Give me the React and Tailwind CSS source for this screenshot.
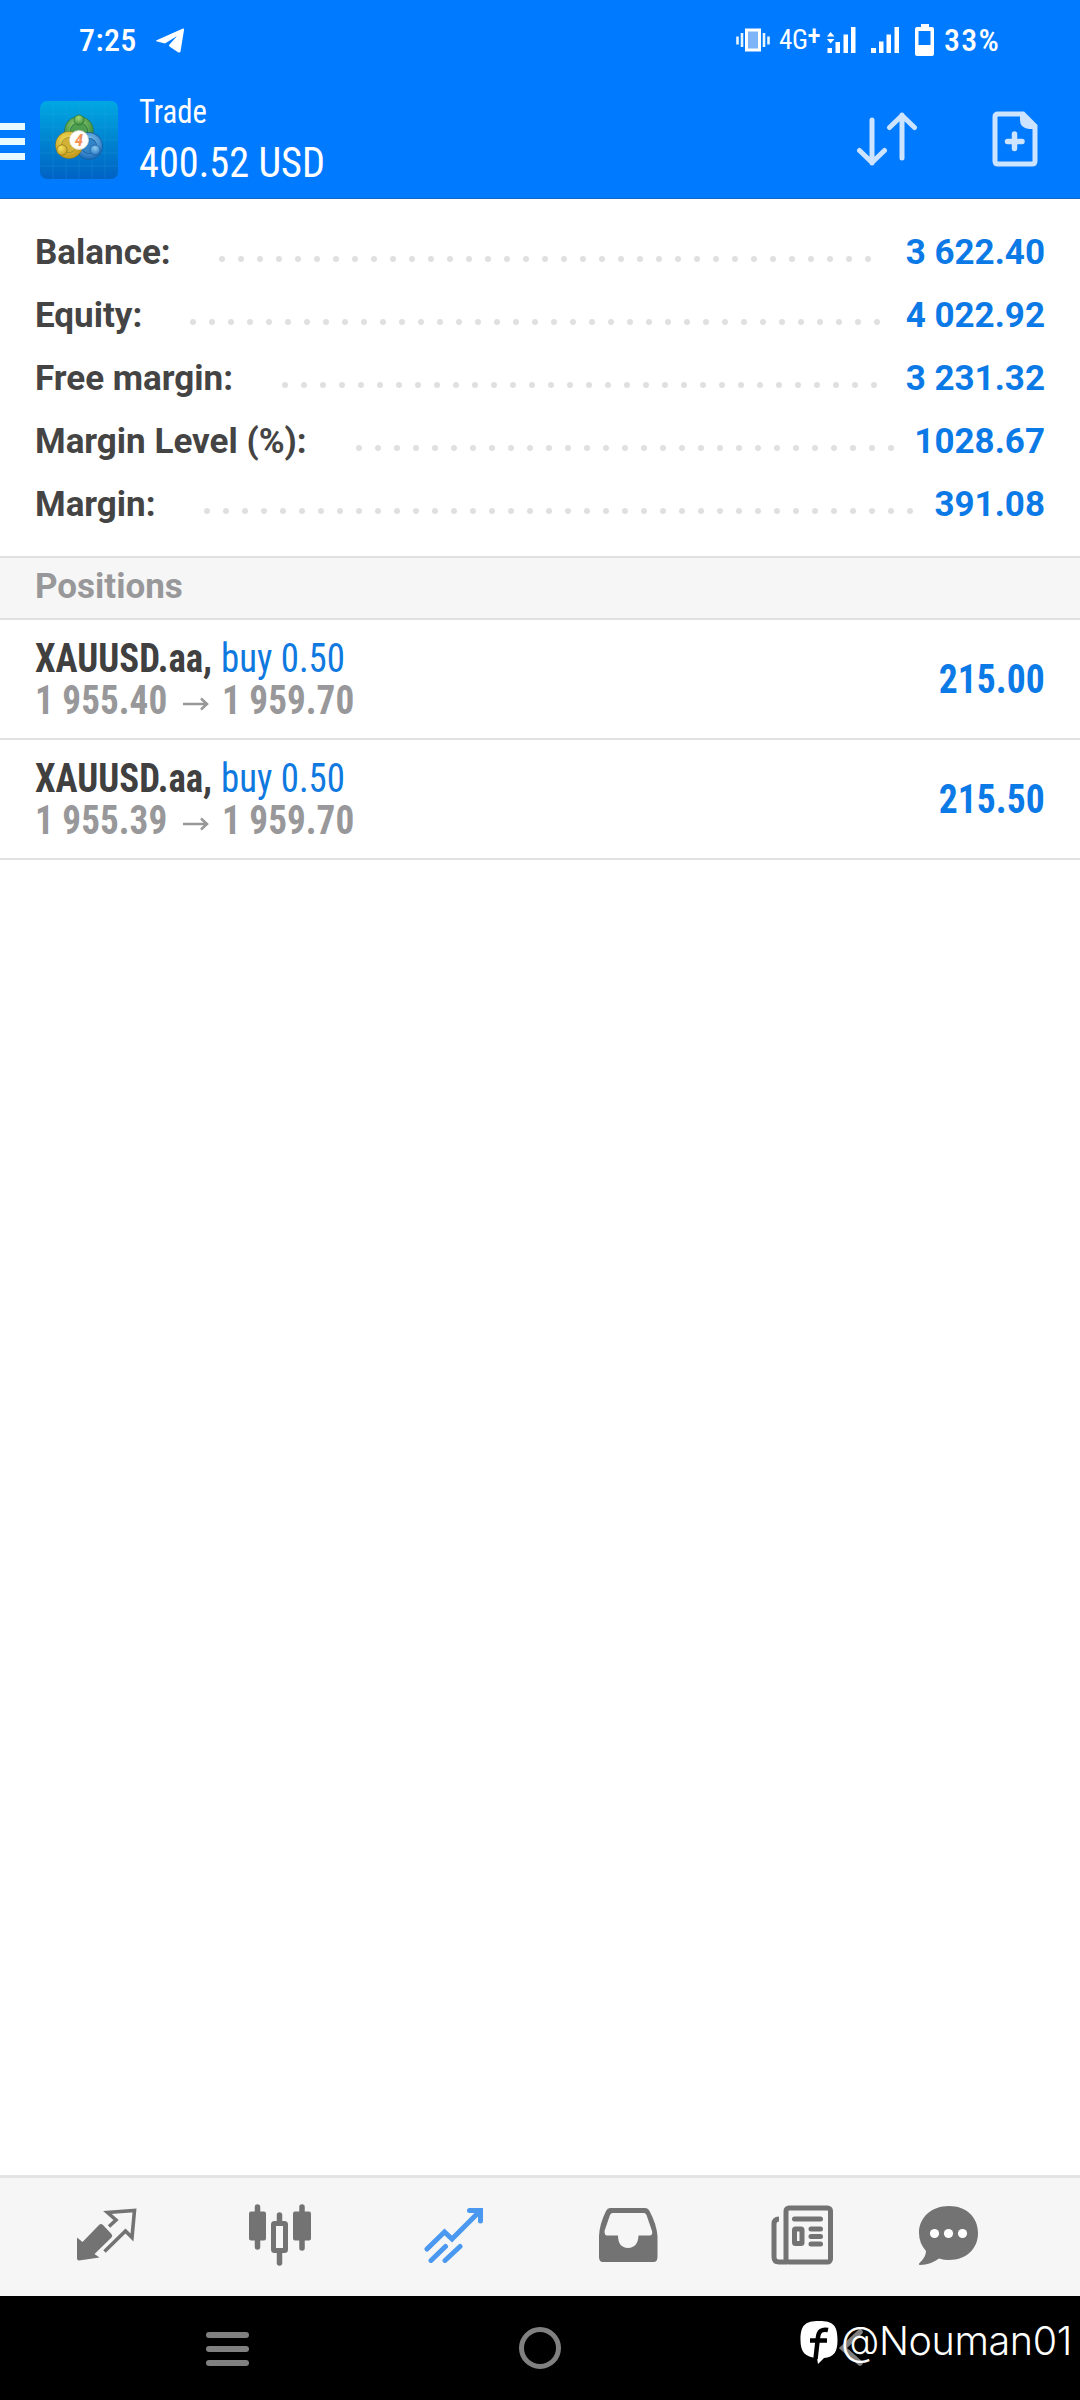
const summary = [
  { label: 'Balance:', value: '3 622.40', labelWidth: 'w-[184px]', dots: 35 },
  { label: 'Equity:', value: '4 022.92', labelWidth: 'w-[155px]', dots: 37 },
  { label: 'Free margin:', value: '3 231.32', labelWidth: 'w-[247px]', dots: 32 },
  { label: 'Margin Level (%):', value: '1028.67', labelWidth: 'w-[321px]', dots: 29 },
  { label: 'Margin:', value: '391.08', labelWidth: 'w-[169px]', dots: 38 },
];

const positions = [
  { id: 1, symbol: 'XAUUSD.aa,', side: 'buy 0.50', open: '1 955.40', current: '1 959.70', profit: '215.00' },
  { id: 2, symbol: 'XAUUSD.aa,', side: 'buy 0.50', open: '1 955.39', current: '1 959.70', profit: '215.50' },
];

function StatusBar() {
  return (
    <div className="flex h-[80px] items-center pl-[79px] pr-[78px] text-white">
      <span className="w-[58px] whitespace-nowrap text-[32px] font-medium leading-none tracking-[0.4px]">7:25</span>
      <svg className="ml-[19px]" width="28" height="25" viewBox="0 0 28 25" fill="#fff">
        <path d="M0 12.5 27 0.5Q28.3 0.3 28 2L24.5 23.500Q24 25 22 24.200L13.500 18.500Q12.500 17.500 13.500 16.500L21 8 9 15.500 1 13.500Q0 13 0 12.500Z" />
      </svg>
      <div className="ml-auto flex items-center">
        <svg width="34" height="24" viewBox="0 0 34 24" fill="none">
          <path d="M1.500 8.500v8M6 5v14M28 5v14M32.500 8.500v8" stroke="#e8f6ff" strokeWidth="2.600" />
          <rect x="10.500" y="2" width="13" height="20" fill="#7db5f8" stroke="#fff" strokeWidth="3" />
        </svg>
        <span className="ml-[9px] flex w-[40px] whitespace-nowrap text-[27px] font-normal leading-none tracking-[-0.4px] font-stretch-condensed">
          4G<span className="-mt-[4px] font-medium">+</span>
        </span>
        <svg width="30" height="26" viewBox="0 0 30 26" fill="#fff" className="ml-[8px]">
          <path d="M3.500 5 7.500 9.500H0zM0 12h7.500L3.500 16.500zM0.500 21h4.500v5H.5zM8.500 15h4.500v11H8.500zM16.500 7.500H21V26h-4.500zM24 0h4.500v26H24z" />
        </svg>
        <svg width="28" height="26" viewBox="0 0 28 26" fill="#fff" className="ml-[14px]">
          <path d="M0 21h5v5H0zM8 14.500h4.500V26H8zM15.500 7.500H20V26h-4.500zM23.500 0H28v26h-4.500z" />
        </svg>
        <svg width="19" height="32" viewBox="0 0 19 32" fill="#fff" className="ml-[16px]">
          <path fillRule="evenodd" d="M6 0h8v3h3q2 0 2 2v25q0 2-2 2H2q-2 0-2-2V5q0-2 2-2h4zM3.500 7v14h12V7z" />
        </svg>
        <span className="ml-[10px] w-[58px] whitespace-nowrap text-[32px] font-medium leading-none tracking-[1.2px]">33%</span>
      </div>
    </div>
  );
}

function AppLogo() {
  return (
    <svg width="78" height="78" viewBox="0 0 78 78">
      <defs>
        <linearGradient id="tile" x1="0" y1="0" x2="0" y2="1">
          <stop offset="0" stopColor="#00a8e2" />
          <stop offset="0.5" stopColor="#0084d0" />
          <stop offset="1" stopColor="#0062c4" />
        </linearGradient>
        <radialGradient id="green" cx=".45" cy=".3" r=".8">
          <stop offset="0" stopColor="#a5d978" />
          <stop offset="1" stopColor="#2c8238" />
        </radialGradient>
        <radialGradient id="yellow" cx=".4" cy=".3" r=".8">
          <stop offset="0" stopColor="#f6e25c" />
          <stop offset="1" stopColor="#c29a1c" />
        </radialGradient>
        <radialGradient id="blue" cx=".5" cy=".3" r=".8">
          <stop offset="0" stopColor="#8ccbf2" />
          <stop offset="1" stopColor="#1d6fbd" />
        </radialGradient>
      </defs>
      <rect width="78" height="78" rx="7" fill="url(#tile)" />
      <path d="M13 0v78M26 0v78M39 0v78M52 0v78M65 0v78M0 13h78M0 26h78M0 39h78M0 52h78M0 65h78" stroke="#3cb4ea" strokeOpacity=".18" />
      <circle cx="39" cy="30" r="11.500" fill="#4f9e50" stroke="#2c7a4a" strokeWidth="6.500" />
      <circle cx="39" cy="30" r="11.500" fill="none" stroke="url(#green)" strokeWidth="5" />
      <circle cx="49" cy="45" r="10.500" fill="#3184c8" stroke="#1a5c9c" strokeWidth="6.500" />
      <circle cx="49" cy="45" r="10.500" fill="none" stroke="url(#blue)" strokeWidth="5" />
      <circle cx="29" cy="44" r="10.500" fill="#d2b234" stroke="#857a2a" strokeWidth="6.500" />
      <circle cx="29" cy="44" r="10.500" fill="none" stroke="url(#yellow)" strokeWidth="5.500" />
      <circle cx="39" cy="19" r="5" fill="url(#green)" stroke="#2a7a38" strokeWidth=".8" />
      <circle cx="22" cy="49" r="5.200" fill="url(#yellow)" stroke="#927a1c" strokeWidth=".8" />
      <circle cx="55" cy="49" r="5" fill="url(#blue)" stroke="#1c5f9f" strokeWidth=".8" />
      <circle cx="39" cy="39" r="9.500" fill="#fff" stroke="#d8d8c8" strokeWidth=".8" />
      <text x="39" y="45" textAnchor="middle" fontSize="17" fontWeight="700" fontStyle="italic" fill="#f2925a">4</text>
    </svg>
  );
}

function Header() {
  return (
    <header className="h-[199px] border-b border-[#1269c4] bg-[#007aff] text-white">
      <StatusBar />
      <div className="flex h-[118px] items-center">
        <div className="mt-[4px] flex w-[25px] flex-col gap-[8px]">
          <span className="h-[7px] bg-[#e6faff]" />
          <span className="h-[7px] bg-[#e6faff]" />
          <span className="h-[7px] bg-[#e6faff]" />
        </div>
        <div className="ml-[15px] mt-[2px]">
          <AppLogo />
        </div>
        <div className="ml-[21px] mt-[2px] flex flex-col font-stretch-condensed">
          <span className="origin-left scale-x-[0.93] text-[33px] leading-[40px]">Trade</span>
          <span className="mt-[6px] origin-left scale-x-[0.96] text-[42px] leading-[50px]">400.52 USD</span>
        </div>
        <svg className="ml-auto" width="62" height="54" viewBox="0 0 62 54" fill="none" stroke="#cce4ff" strokeWidth="5" strokeLinecap="round" strokeLinejoin="round">
          <path d="M16 8v43M3.500 38.500 16 50.500 28.500 38.500M46 46V3M33.500 15.500 46 3.500 58.500 15.500" />
        </svg>
        <svg className="ml-[74px] mr-[42px]" width="46" height="56" viewBox="0 0 46 56">
          <path d="M6 3h25l12 12v35q0 3-3 3H6q-3 0-3-3V6q0-3 3-3z" fill="none" stroke="#cce4ff" strokeWidth="5" />
          <path d="M28 3h5l11 11v4h-7q-9-1-9-9z" fill="#cce4ff" />
          <path d="M22.500 23v14.500M15.500 30.500h14.500" stroke="#cce4ff" strokeWidth="5.500" strokeLinecap="round" />
        </svg>
      </div>
    </header>
  );
}

function SummaryRow({ row }) {
  return (
    <div className="flex h-[63px] items-center text-[35px] font-bold">
      <span className={`${row.labelWidth} shrink-0 whitespace-nowrap text-[#444]`}>{row.label}</span>
      <div className="mt-[11px] flex gap-[13px]">
        {Array.from({ length: row.dots }, (_, i) => (
          <span key={i} className="size-[6px] shrink-0 rounded-full bg-[#e0e0e0]" />
        ))}
      </div>
      <span className="ml-auto whitespace-nowrap text-[#0c7ae6]">{row.value}</span>
    </div>
  );
}

function PositionRow({ position }) {
  return (
    <div className="flex h-[120px] items-center justify-between border-b-2 border-[#e2e2e2] pl-[35px] pr-[35px] pt-[2px] text-[40px] leading-[42px] font-stretch-condensed">
      <div>
        <div className="flex whitespace-nowrap">
          <span className="w-[186px] origin-left scale-x-[0.92] font-bold text-[#404040]">{position.symbol}</span>
          <span className="origin-left scale-x-[0.92] text-[#0f79e0]">{position.side}</span>
        </div>
        <div className="flex items-center whitespace-nowrap font-bold text-[#98989a]">
          <span className="w-[148px] origin-left scale-x-[0.93]">{position.open}</span>
          <svg width="26" height="14" viewBox="0 0 26 14" fill="none" stroke="#98989a" strokeWidth="2.500" className="mt-[5px]">
            <path d="M0 7h24M18 1.500 24 7l-6 5.500" />
          </svg>
          <span className="ml-[13px] origin-left scale-x-[0.93]">{position.current}</span>
        </div>
      </div>
      <span className="origin-right scale-x-[0.94] font-bold text-[#0c7ae6]">{position.profit}</span>
    </div>
  );
}

function TabBar() {
  return (
    <nav className="flex h-[121px] items-center border-t-[3px] border-[#e4e4e4] bg-[#f6f6f6] pb-[4px] pl-[76px] text-[#737373]">
      <svg width="62" height="54" viewBox="0 0 62 54">
        <path d="M1 29.500 6.500 34 23 17q2-2 4 0l8.500 9q1.500 2 0 3.500L18.500 46l5 3.500L3 52.500q-2 0-2-2z" fill="currentColor" />
        <path d="M33 18.500 40 12 31.500 4.500 58.500 2.500 56 29.500 49.500 23 28.500 43.500" fill="none" stroke="currentColor" strokeWidth="3.600" />
      </svg>
      <svg className="ml-[110px]" width="64" height="62" viewBox="0 0 64 62">
        <path d="M9.500 3v40M54 3v41M31.500 11v16M31.500 48v11" stroke="currentColor" strokeWidth="5.500" strokeLinecap="round" />
        <rect x="1" y="7.500" width="17" height="29" rx="2" fill="currentColor" />
        <rect x="45" y="7.500" width="18" height="29" rx="2" fill="currentColor" />
        <rect x="25.500" y="19.500" width="12" height="27" rx="1" fill="#f6f6f6" stroke="currentColor" strokeWidth="5" />
      </svg>
      <svg className="ml-[112px]" width="60" height="56" viewBox="0 0 60 56" fill="none" stroke="#4a98f0" strokeWidth="5">
        <path d="M3 42 20.500 25 28 32 56 4M45.500 3.500H56.500V14M7 53.500 21.500 39.500M21 53.500 36 39.500" strokeLinecap="round" />
      </svg>
      <svg className="ml-[114px]" width="60" height="56" viewBox="0 0 60 56">
        <path fillRule="evenodd" d="M12 1h35q3 0 4.500 3 7 13 8 25v21q0 5-4 5H5q-4 0-4-5V29Q1.500 17 8 4q1.500-3 4-3zM14.500 6q-1.500 0-2.500 2L6.500 24q0 4 2 4.500H20q0 12 10 12.500 10-.5 10.500-12.500H52q3-.5 2-4.500L48.500 8q-1-2-2.500-2z" fill="currentColor" />
      </svg>
      <svg className="ml-[112px]" width="64" height="60" viewBox="0 0 64 60" fill="none" stroke="currentColor" strokeWidth="5">
        <rect x="16" y="3" width="44.500" height="54" rx="3" />
        <path d="M9 14q-5 0-5 5v33q0 5 5 5h8" />
        <path d="M24.500 14h26M41 24h9.500M41 31.500h9.500M41 39h9.500" strokeLinecap="round" />
        <rect x="24.500" y="24" width="7.500" height="14.500" rx="1" />
      </svg>
      <svg className="ml-[84px]" width="62" height="60" viewBox="0 0 62 60">
        <path d="M31 1C48 1 60 12 60 28S48 55 31 55q-5 0-10-1.500Q13 59.500 2 60 0 59.500 1.500 58 8 52 8 46 1 38 1 28C1 12 14 1 31 1z" fill="currentColor" />
        <circle cx="16.500" cy="28.500" r="4.600" fill="#fff" />
        <circle cx="30.500" cy="28.500" r="4.600" fill="#fff" />
        <circle cx="44.500" cy="28.500" r="4.600" fill="#fff" />
      </svg>
    </nav>
  );
}

function SystemNav() {
  return (
    <div className="relative flex h-[104px] items-center bg-black">
      <div className="ml-[206px] mt-[2px] flex w-[43px] flex-col gap-[8px]">
        <span className="h-[6px] rounded-full bg-[#808080]" />
        <span className="h-[6px] rounded-full bg-[#808080]" />
        <span className="h-[6px] rounded-full bg-[#808080]" />
      </div>
      <div className="ml-[270px] size-[42px] rounded-full border-[5px] border-[#808080]" />
      <svg className="ml-[278px]" width="26" height="40" viewBox="0 0 26 40" fill="none" stroke="#808080" strokeWidth="5.500" strokeLinecap="round">
        <path d="M21 4 4 20 21 35" />
      </svg>
      {/* watermark over the back button */}
      <div className="absolute left-[800px] top-[25px] flex items-start text-white">
        <svg width="38" height="44" viewBox="0 0 38 44">
          <path d="M19 0C33 0 37.500 4 37.500 19 37.500 31 34 36 24 37l-6 6-1-6C5 36 .5 31 .5 19 .5 4 5 0 19 0z" fill="#fff" />
          <path d="M28 9q-9-2-10 7L15.500 38M10 19.500h17" fill="none" stroke="#000" strokeWidth="4.500" />
        </svg>
        <span className="ml-[3px] whitespace-nowrap font-['Inter'] text-[39.5px] font-light leading-[40px] tracking-[-0.4px]">@Nouman01</span>
      </div>
    </div>
  );
}

export default function App() {
  return (
    <div className="flex h-[2400px] w-[1080px] flex-col overflow-hidden bg-white font-['Roboto_Condensed','Roboto',sans-serif]">
      <Header />
      <section className="h-[357px] pl-[35px] pr-[35px] pt-[23px] font-['Roboto',sans-serif]">
        {summary.map((row) => (
          <SummaryRow key={row.label} row={row} />
        ))}
      </section>
      <div className="flex h-[64px] items-center border-y-2 border-[#e0e0e0] bg-[#f6f6f6] pb-[2px] pl-[35px] font-['Roboto',sans-serif] text-[35px] font-bold text-[#98989a]">
        Positions
      </div>
      {positions.map((position) => (
        <PositionRow key={position.id} position={position} />
      ))}
      <main className="flex-1" />
      <TabBar />
      <SystemNav />
    </div>
  );
}
